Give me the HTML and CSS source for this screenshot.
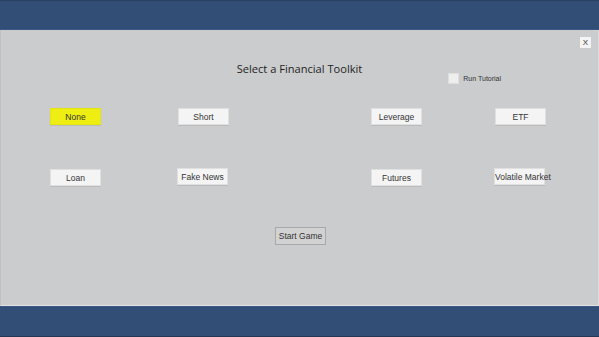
FILE: index.html
```html
<!DOCTYPE html>
<html>
<head>
<meta charset="utf-8">
<link rel="stylesheet" href="styles.css">
</head>
<body>
<div class="screen">
  <div class="bar bar-top"></div>
  <div class="panel">
    <div class="close-row"><button class="close">X</button></div>
    <div class="header">
      <div></div>
      <h1 class="title">Select a Financial Toolkit</h1>
      <label class="tutorial"><span class="check"></span><span class="tut-text">Run Tutorial</span></label>
    </div>
    <div class="grid">
      <button class="btn btn-selected">None</button>
      <button class="btn">Short</button>
      <button class="btn">Leverage</button>
      <button class="btn">ETF</button>
      <button class="btn r2">Loan</button>
      <button class="btn r2 shift">Fake News</button>
      <button class="btn r2 down">Futures</button>
      <button class="btn r2 shift">Volatile Market</button>
    </div>
    <div class="start-row"><button class="start">Start Game</button></div>
  </div>
  <div class="bar bar-bottom"></div>
</div>
</body>
</html>
```
FILE: styles.css
```css
* { box-sizing: border-box; }
html, body { margin: 0; padding: 0; }
body { width: 599px; height: 337px; overflow: hidden; font-family: "Liberation Sans", Arial, sans-serif; }
.screen { display: flex; flex-direction: column; height: 337px; }
.bar { background: #334e76; }
.bar-top { height: 30px; border-top: 1px solid #2a4063; border-bottom: 1px solid #3b5680; }
.bar-bottom { height: 31px; border-top: 1px solid #3a5580; border-bottom: 1px solid #243856; }
.panel { flex: 1; background: #cbcccd; border-left: 1px solid #bfc0c2; border-right: 1px solid #dcdcdd; border-bottom: 1px solid #e2e3e4; display: flex; flex-direction: column; }
.close-row { display: flex; justify-content: flex-end; padding: 7px 7px 0 0; height: 18px; }
.close { width: 11px; height: 11px; padding: 0; border: none; background: #f4f4f4; font-family: "Liberation Sans", Arial, sans-serif; font-size: 8px; line-height: 11px; color: #333; }
.header { display: grid; grid-template-columns: 1fr auto 1fr; align-items: start; height: 60px; }
.title { margin: 12px 0 0 0; font-family: "Open Sans", sans-serif; font-weight: 400; font-size: 11.1px; color: #1e1e1e; line-height: 18px; }
.tutorial { display: flex; align-items: center; gap: 4px; margin: 25px 0 0 86px; }
.check { width: 11px; height: 11px; background: #eeeeee; border: 1px solid #dedede; }
.tut-text { font-size: 7px; color: #333; }
.grid { display: grid; grid-template-columns: 128px 193px 124px 50px; grid-template-rows: 17px 17px; row-gap: 43px; padding-left: 49px; }
.btn { width: 51px; height: 17px; padding: 0; border: 1px solid #e0e0e0; background: #f4f4f4; font-family: "Liberation Sans", Arial, sans-serif; font-size: 8.5px; color: #333; white-space: nowrap; box-shadow: 0 1px 0 #bcbcbc; }
.btn-selected { background: #eeee12; border-color: #e4e40f; color: #333; }
.r2 { margin-top: 1px; }
.shift { margin-top: 0; margin-left: -1px; }
.down { margin-top: 1px; }
.start-row { padding: 40px 0 0 274px; }
.start { width: 51px; height: 18px; padding: 0; background: #d2d2d2; border: 1px solid #a9a9a9; font-family: "Liberation Sans", Arial, sans-serif; font-size: 8.5px; color: #333; }
```
